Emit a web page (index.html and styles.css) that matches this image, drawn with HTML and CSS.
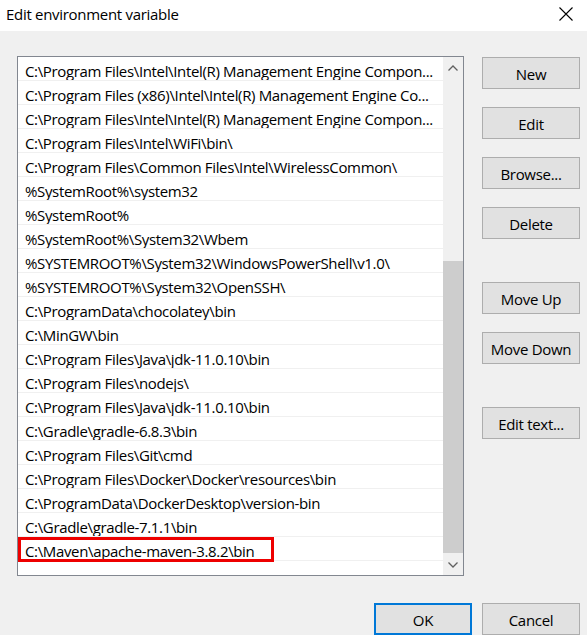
FILE: index.html
```html
<!DOCTYPE html>
<html>
<head>
<meta charset="utf-8">
<link rel="stylesheet" href="styles.css">
</head>
<body>
<div class="window">
  <div class="titlebar">
    <span class="title">Edit environment variable</span>
    <svg class="close" width="14" height="14" viewBox="0 0 14 14"><path d="M0.5 0.5 L13.5 13.5 M13.5 0.5 L0.5 13.5" stroke="#000" stroke-width="1.1" fill="none"/></svg>
  </div>
  <div class="content">
    <div class="main">
      <div class="listbox">
        <div class="rows">
          <div class="row">C:\Program Files\Intel\Intel(R) Management Engine Compon...</div>
          <div class="row">C:\Program Files (x86)\Intel\Intel(R) Management Engine Co...</div>
          <div class="row">C:\Program Files\Intel\Intel(R) Management Engine Compon...</div>
          <div class="row">C:\Program Files\Intel\WiFi\bin\</div>
          <div class="row">C:\Program Files\Common Files\Intel\WirelessCommon\</div>
          <div class="row">%SystemRoot%\system32</div>
          <div class="row">%SystemRoot%</div>
          <div class="row">%SystemRoot%\System32\Wbem</div>
          <div class="row">%SYSTEMROOT%\System32\WindowsPowerShell\v1.0\</div>
          <div class="row">%SYSTEMROOT%\System32\OpenSSH\</div>
          <div class="row">C:\ProgramData\chocolatey\bin</div>
          <div class="row">C:\MinGW\bin</div>
          <div class="row">C:\Program Files\Java\jdk-11.0.10\bin</div>
          <div class="row">C:\Program Files\nodejs\</div>
          <div class="row">C:\Program Files\Java\jdk-11.0.10\bin</div>
          <div class="row">C:\Gradle\gradle-6.8.3\bin</div>
          <div class="row">C:\Program Files\Git\cmd</div>
          <div class="row">C:\Program Files\Docker\Docker\resources\bin</div>
          <div class="row">C:\ProgramData\DockerDesktop\version-bin</div>
          <div class="row">C:\Gradle\gradle-7.1.1\bin</div>
          <div class="row marked">C:\Maven\apache-maven-3.8.2\bin<span class="highlight"></span></div>
          <div class="row empty"></div>
        </div>
        <div class="scrollbar">
          <div class="arrow up"><svg width="10" height="6" viewBox="0 0 10 6"><path d="M0.5 5.5 L5 1 L9.5 5.5" stroke="#606060" stroke-width="1.3" fill="none"/></svg></div>
          <div class="track"><div class="thumb"></div></div>
          <div class="arrow down"><svg width="10" height="6" viewBox="0 0 10 6"><path d="M0.5 0.5 L5 5 L9.5 0.5" stroke="#606060" stroke-width="1.3" fill="none"/></svg></div>
        </div>
      </div>
      <div class="buttons">
        <div class="group">
          <button class="btn">New</button>
          <button class="btn">Edit</button>
          <button class="btn">Browse...</button>
          <button class="btn">Delete</button>
        </div>
        <div class="group">
          <button class="btn">Move Up</button>
          <button class="btn">Move Down</button>
        </div>
        <div class="group">
          <button class="btn">Edit text...</button>
        </div>
      </div>
    </div>
    <div class="footer">
      <button class="btn default">OK</button>
      <button class="btn">Cancel</button>
    </div>
  </div>
</div>
</body>
</html>
```
FILE: styles.css
```css
html, body {
  margin: 0;
  padding: 0;
}
body {
  width: 587px;
  height: 635px;
  overflow: hidden;
  background: #f0f0f0;
  font-family: "Open Sans", "Noto Sans", sans-serif;
  font-size: 15px;
  color: #000;
}
.window {
  width: 587px;
  height: 635px;
  display: flex;
  flex-direction: column;
}
.titlebar {
  height: 32px;
  background: #fff;
  display: flex;
  align-items: center;
  justify-content: space-between;
  padding: 0 14px 0 6px;
  box-sizing: border-box;
}
.title {
  font-size: 15px;
  letter-spacing: -0.3px;
  margin-top: -4px;
}
.close {
  margin-top: -3px;
}
.content {
  flex: 1;
  padding: 25px 7px 0 17px;
  display: flex;
  flex-direction: column;
}
.main {
  display: flex;
  gap: 18px;
}
.listbox {
  width: 445px;
  height: 518px;
  border: 1px solid #828790;
  background: #fff;
  display: flex;
  overflow: hidden;
}
.rows {
  flex: 1;
  overflow: hidden;
}
.row {
  position: relative;
  height: 24px;
  line-height: 20px;
  padding-top: 4px;
  box-sizing: border-box;
  border-bottom: 1px solid #f0f0f0;
  padding-left: 7px;
  white-space: nowrap;
  overflow: hidden;
  letter-spacing: -0.35px;
}
.row.marked {
  overflow: visible;
}
.highlight {
  position: absolute;
  left: 0;
  top: 0;
  width: 256px;
  height: 25px;
  border: 3px solid #ee0000;
  box-sizing: border-box;
}
.scrollbar {
  width: 20px;
  background: #f0f0f0;
  display: flex;
  flex-direction: column;
}
.arrow {
  height: 21px;
  display: flex;
  align-items: center;
  justify-content: center;
}
.track {
  flex: 1;
  display: flex;
  flex-direction: column;
  justify-content: flex-end;
  padding-bottom: 1px;
}
.thumb {
  height: 292px;
  background: #cdcdcd;
}
.buttons {
  display: flex;
  flex-direction: column;
  gap: 43px;
  margin-top: 1px;
}
.group {
  display: flex;
  flex-direction: column;
  gap: 18px;
}
.btn {
  width: 98px;
  height: 32px;
  background: #e1e1e1;
  border: 1px solid #adadad;
  font-family: "Open Sans", "Noto Sans", sans-serif;
  font-size: 15px;
  letter-spacing: -0.3px;
  color: #000;
  padding: 2px 0 0 0;
  margin: 0;
  box-sizing: border-box;
}
.footer {
  display: flex;
  justify-content: flex-end;
  gap: 10px;
  margin-top: 27px;
}
.btn.default {
  border: 2px solid #0078d7;
}
```
